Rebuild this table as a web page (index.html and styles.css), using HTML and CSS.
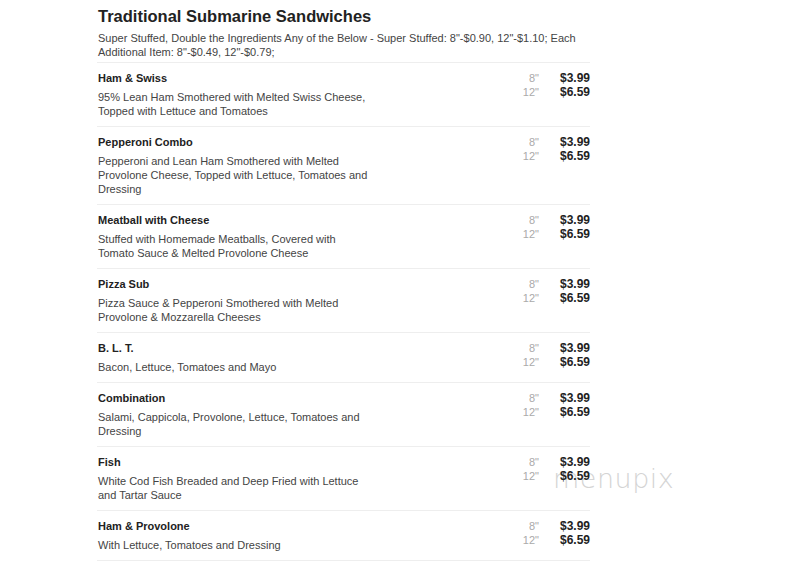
FILE: index.html
```html
<!DOCTYPE html>
<html>
<head>
<meta charset="utf-8">
<link rel="stylesheet" href="styles.css">
</head>
<body>
<div class="menu">
  <h1 class="title">Traditional Submarine Sandwiches</h1>
  <p class="intro">Super Stuffed, Double the Ingredients Any of the Below - Super Stuffed: 8"-$0.90, 12"-$1.10; Each Additional Item: 8"-$0.49, 12"-$0.79;</p>
  <div class="items">
    <div class="item">
      <div class="info"><div class="name">Ham &amp; Swiss</div><div class="desc">95% Lean Ham Smothered with Melted Swiss Cheese, Topped with Lettuce and Tomatoes</div></div>
      <div class="prices"><div class="size">8"</div><div class="price">$3.99</div><div class="size">12"</div><div class="price">$6.59</div></div>
    </div>
    <div class="item">
      <div class="info"><div class="name">Pepperoni Combo</div><div class="desc">Pepperoni and Lean Ham Smothered with Melted Provolone Cheese, Topped with Lettuce, Tomatoes and Dressing</div></div>
      <div class="prices"><div class="size">8"</div><div class="price">$3.99</div><div class="size">12"</div><div class="price">$6.59</div></div>
    </div>
    <div class="item">
      <div class="info"><div class="name">Meatball with Cheese</div><div class="desc">Stuffed with Homemade Meatballs, Covered with Tomato Sauce &amp; Melted Provolone Cheese</div></div>
      <div class="prices"><div class="size">8"</div><div class="price">$3.99</div><div class="size">12"</div><div class="price">$6.59</div></div>
    </div>
    <div class="item">
      <div class="info"><div class="name">Pizza Sub</div><div class="desc">Pizza Sauce &amp; Pepperoni Smothered with Melted Provolone &amp; Mozzarella Cheeses</div></div>
      <div class="prices"><div class="size">8"</div><div class="price">$3.99</div><div class="size">12"</div><div class="price">$6.59</div></div>
    </div>
    <div class="item">
      <div class="info"><div class="name">B. L. T.</div><div class="desc">Bacon, Lettuce, Tomatoes and Mayo</div></div>
      <div class="prices"><div class="size">8"</div><div class="price">$3.99</div><div class="size">12"</div><div class="price">$6.59</div></div>
    </div>
    <div class="item">
      <div class="info"><div class="name">Combination</div><div class="desc">Salami, Cappicola, Provolone, Lettuce, Tomatoes and Dressing</div></div>
      <div class="prices"><div class="size">8"</div><div class="price">$3.99</div><div class="size">12"</div><div class="price">$6.59</div></div>
    </div>
    <div class="item">
      <div class="info"><div class="name">Fish</div><div class="desc">White Cod Fish Breaded and Deep Fried with Lettuce and Tartar Sauce</div></div>
      <div class="prices"><div class="size">8"</div><div class="price">$3.99</div><div class="size">12"</div><div class="price">$6.59</div></div>
    </div>
    <div class="item">
      <div class="info"><div class="name">Ham &amp; Provolone</div><div class="desc">With Lettuce, Tomatoes and Dressing</div></div>
      <div class="prices"><div class="size">8"</div><div class="price">$3.99</div><div class="size">12"</div><div class="price">$6.59</div></div>
    </div>
  </div>
  <div class="watermark">menupix</div>
</div>
</body>
</html>
```
FILE: styles.css
```css
html, body {
  margin: 0;
  padding: 0;
  background: #fff;
}
body {
  font-family: "Liberation Sans", Arial, sans-serif;
  color: #333;
}
.menu {
  position: relative;
  z-index: 0;
  width: 493px;
  margin-left: 97px;
  padding-top: 5px;
}
.title {
  margin: 0 0 0 1px;
  font-size: 16.5px;
  line-height: 22px;
  font-weight: bold;
  color: #222;
}
.intro {
  margin: 4px 0 0 1px;
  font-size: 11px;
  line-height: 14px;
  color: #444;
}
.items {
  margin-top: 3px;
  border-top: 1px solid #eee;
}
.item {
  display: flex;
  justify-content: space-between;
  padding: 8px 0 8px 1px;
  border-bottom: 1px solid #eee;
}
.info {
  width: 272px;
}
.name {
  font-size: 11px;
  line-height: 14px;
  font-weight: bold;
  color: #222;
}
.desc {
  margin-top: 5px;
  font-size: 11px;
  line-height: 14px;
  color: #444;
}
.prices {
  display: grid;
  grid-template-columns: auto 51px;
  align-content: start;
  font-size: 11px;
  line-height: 14px;
}
.size {
  text-align: right;
  color: #aaa;
}
.price {
  text-align: right;
  font-size: 12px;
  font-weight: bold;
  color: #222;
}
.watermark {
  position: absolute;
  z-index: -1;
  left: 456px;
  top: 463px;
  font-family: "DejaVu Sans", sans-serif;
  font-weight: 200;
  font-size: 27px;
  color: #d4d4d4;
  letter-spacing: 0.5px;
}
```
